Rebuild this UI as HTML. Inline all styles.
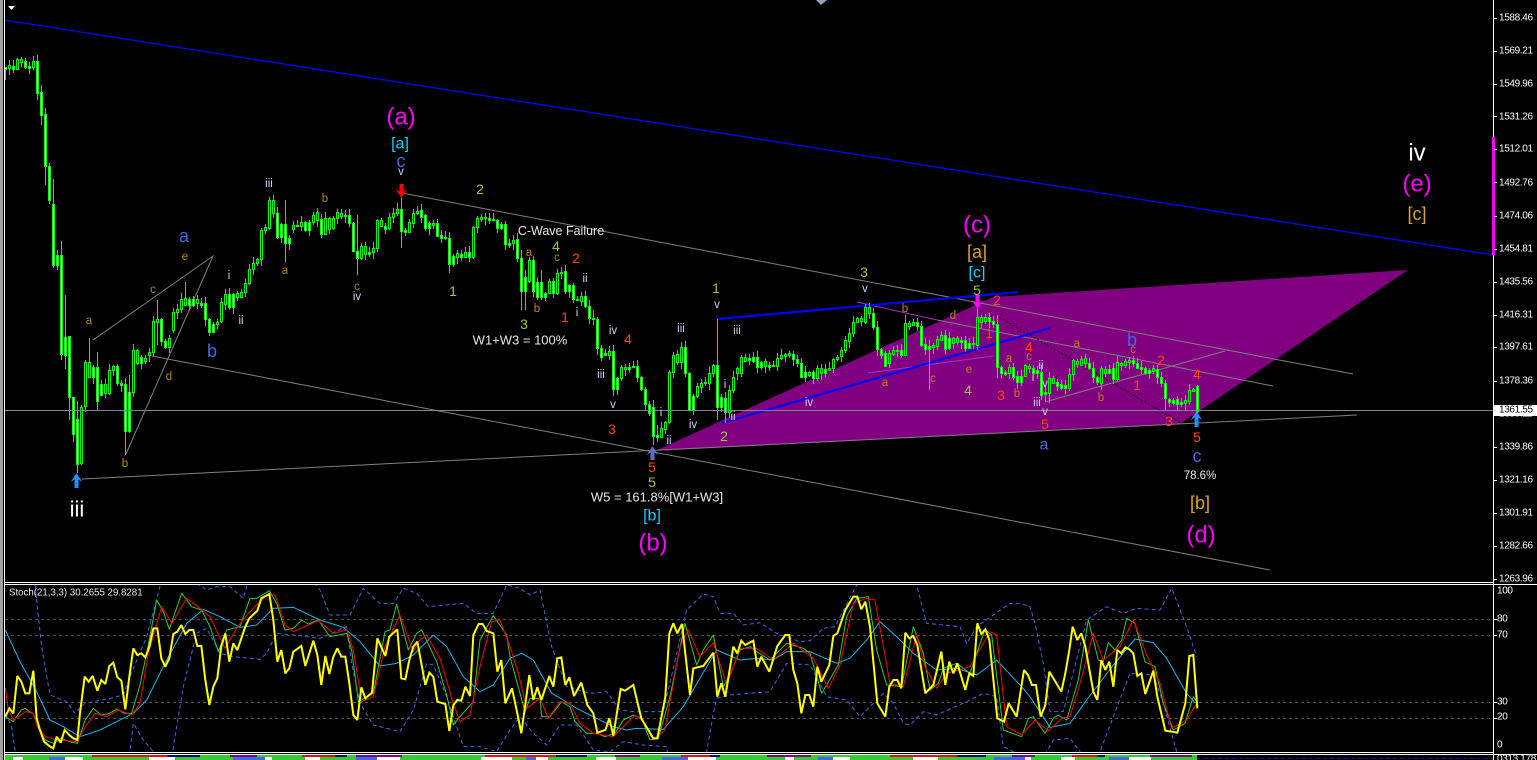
<!DOCTYPE html>
<html><head><meta charset="utf-8"><title>Chart</title>
<style>
html,body{margin:0;padding:0;background:#000;width:1537px;height:760px;overflow:hidden}
svg{display:block;position:absolute;left:0;top:0}
text{font-family:"Liberation Sans",sans-serif;text-anchor:middle;dominant-baseline:central}
.ax text{text-anchor:start;fill:#fff;font-size:10px;letter-spacing:-.35px}
.M{fill:#f0f;font-size:24px}.C{fill:#00d4ff;font-size:16px}.G{fill:#daa520;font-size:18px}
.R{fill:#4169e1;font-size:18px}.L{fill:#c8d4f4;font-size:11.5px}.D{fill:#b8860b;font-size:11.5px}
.Y{fill:#9acd32;font-size:14px}.O{fill:#ff4500;font-size:14px}.W{fill:#e8e8e8;font-size:13px}
.l{fill:none;stroke:#808080;stroke-width:1}
</style></head><body>
<svg id="s" width="1537" height="760" viewBox="0 0 1537 760">
<rect width="1537" height="760" fill="#000"/>
<rect x="0" y="0" width="3" height="760" fill="#a0a0a0"/>
<polygon points="655,451 993,297 1408,270 1180,424" fill="#800080"/>
<g class="l">
<path d="M93 340L213 256L126 454"/>
<path d="M152 356L1270 570"/>
<path d="M82 479L1357 415"/>
<path d="M402 193L1353 374"/>
<path d="M937 320L1273 386"/>
<path d="M1045 402L1225 351"/>
</g>
<path d="M857 302L937 320" stroke="#a030d0" fill="none"/>
<path d="M868 373L993 356" stroke="#a030d0" fill="none"/>
<path d="M999 317L1181 423" stroke="#000" stroke-dasharray="2 2" fill="none"/>
<path d="M5 20L1493 255" stroke="#0000ff" stroke-width="1.3" fill="none"/>
<path d="M717 319L1018 292M722 423L1050 328" stroke="#0000ff" stroke-width="2.2" fill="none"/>
<g id="cw"></g>
<path d="M5 410.5H1493" stroke="#778899" fill="none"/>
<g id="arrows">
<path transform="translate(401.5,198) scale(1,-1)" d="M0 0L5.8 9L2 6.5V14H-2V6.5L-5.8 9Z" fill="#f00"/>
<path transform="translate(76.5,473)" d="M0 0L5.8 9L2 6.5V15H-2V6.5L-5.8 9Z" fill="#1e90ff"/>
<path transform="translate(652.5,446)" d="M0 0L5.8 9L2 6.5V14H-2V6.5L-5.8 9Z" fill="#6070c0"/>
<path transform="translate(977.5,309) scale(1,-1)" d="M0 0L5.8 9L2 6.5V14H-2V6.5L-5.8 9Z" fill="#f0f"/>
<path transform="translate(1196.5,411)" d="M0 0L5.8 9L2 6.5V16H-2V6.5L-5.8 9Z" fill="#1e90ff"/>
</g>
<g>
<text x="401" y="117" class="M">(a)</text><text x="400" y="144" class="C">[a]</text><text x="401" y="161" class="R">c</text><text x="401" y="172" class="L">v</text>
<text x="184" y="236" class="R">a</text><text x="185" y="257" class="D">e</text><text x="153" y="290" class="D">c</text><text x="89" y="321" class="D">a</text><text x="125" y="464" class="D">b</text><text x="169" y="377" class="D">d</text><text x="212" y="351" class="R">b</text>
<text x="241" y="321" class="L">ii</text><text x="229" y="276" class="L">i</text><text x="269" y="184" class="L">iii</text><text x="285" y="271" class="D">a</text><text x="325" y="199" class="D">b</text><text x="357" y="287" class="D">c</text><text x="357" y="297" class="L">iv</text>
<text x="480" y="189" class="Y">2</text><text x="453" y="291" class="Y">1</text><text x="561" y="231" class="W" style="font-size:12.5px">C-Wave Failure</text>
<text x="529" y="253" class="D">a</text><text x="524" y="324" class="Y">3</text><text x="537" y="309" class="D">b</text><text x="557" y="258" class="D">c</text><text x="556" y="246" class="Y">4</text><text x="576" y="258" class="O">2</text><text x="565" y="317" class="O">1</text><text x="585" y="279" class="L">ii</text><text x="577" y="313" class="L">i</text><text x="613" y="331" class="L">iv</text><text x="628" y="339" class="O">4</text><text x="601" y="375" class="L">iii</text><text x="613" y="405" class="L">v</text><text x="612" y="429" class="O">3</text>
<text x="520" y="340" class="W">W1+W3 = 100%</text>
<text x="661" y="413" class="L">i</text><text x="669" y="441" class="L">ii</text><text x="681" y="329" class="L">iii</text><text x="693" y="425" class="L">iv</text><text x="652" y="467" class="O">5</text><text x="652" y="482" class="Y">5</text>
<text x="657" y="497" class="W">W5 = 161.8%[W1+W3]</text><text x="652" y="516" class="C">[b]</text><text x="653" y="543" class="M">(b)</text>
<text x="716" y="288" class="Y">1</text><text x="717" y="305" class="L">v</text><text x="737" y="331" class="L">iii</text><text x="725" y="385" class="L">i</text><text x="733" y="417" class="L">ii</text><text x="724" y="436" class="Y">2</text><text x="809" y="403" class="L">iv</text>
<text x="864" y="272" class="Y">3</text><text x="865" y="289" class="L">v</text><text x="905" y="309" class="D">b</text><text x="885" y="383" class="D">a</text><text x="933" y="379" class="D">c</text><text x="953" y="316" class="D">d</text><text x="969" y="370" class="D">e</text><text x="968" y="390" class="Y">4</text>
<text x="977" y="225" class="M">(c)</text><text x="977" y="252" class="G">[a]</text><text x="977" y="273" class="C">[c]</text><text x="977" y="290" class="Y">5</text>
<text x="997" y="300" class="O">2</text><text x="989" y="333" class="O">1</text><text x="1001" y="395" class="O">3</text><text x="1009" y="359" class="D">a</text><text x="1017" y="394" class="D">b</text><text x="1029" y="357" class="D">c</text><text x="1029" y="347" class="O">4</text><text x="1033" y="378" class="L">i</text><text x="1041" y="366" class="L">ii</text><text x="1037" y="403" class="L">iii</text><text x="1045" y="412" class="L">v</text><text x="1045" y="384" class="L">v</text><text x="1045" y="424" class="O">5</text><text x="1044" y="445" class="R" style="font-size:16px">a</text>
<text x="1077" y="344" class="D">a</text><text x="1101" y="398" class="D">b</text><text x="1132" y="340" class="R">b</text><text x="1133" y="350" class="D">c</text><text x="1137" y="385" class="O">1</text><text x="1161" y="360" class="O">2</text><text x="1169" y="421" class="O">3</text><text x="1197" y="374" class="O">4</text><text x="1197" y="437" class="O">5</text><text x="1197" y="456" class="R">c</text>
<text x="1200" y="476" class="W" style="font-size:11.5px">78.6%</text><text x="1200" y="503" class="G">[b]</text><text x="1201" y="535" class="M">(d)</text>
<text x="77" y="509" fill="#fff" style="font-size:22px">iii</text>
<text x="1417" y="153" fill="#fff" style="font-size:24px">iv</text><text x="1417" y="184" class="M">(e)</text><text x="1417" y="214" class="G">[c]</text>
</g>
<!-- frame -->
<path d="M821 5L816 0H827Z" fill="#8fa3b5"/>
<path d="M8 6H15L11.5 10Z" fill="#fff"/>
<rect x="4" y="0" width="1" height="760" fill="#fff"/>
<rect x="1493" y="0" width="1" height="760" fill="#fff"/>
<rect x="1492" y="137" width="3" height="118" fill="#f0f"/>
<rect x="4" y="582" width="1490" height="1" fill="#fff"/>
<rect x="4" y="584" width="1533" height="1" fill="#fff"/>
<rect x="4" y="752" width="1490" height="1" fill="#fff"/>
<rect x="4" y="754" width="1533" height="1" fill="#fff"/>
<g stroke="#fff" fill="none">
<path d="M1494 18.500h3M1494 51.500h3M1494 84.500h3M1494 116.500h3M1494 149.500h3M1494 182.500h3M1494 216.500h3M1494 249.500h3M1494 282.500h3M1494 315.500h3M1494 347.500h3M1494 381.500h3M1494 414.500h3M1494 447.500h3M1494 480.500h3M1494 513.500h3M1494 546.500h3M1494 579.500h3M1494 619.500h3M1494 635.500h3M1494 702.500h3M1494 718.500h3"/>
</g>
<g class="ax">
<text x="1499" y="18">1588.46</text><text x="1499" y="51">1569.21</text><text x="1499" y="84">1549.96</text><text x="1499" y="117">1531.26</text><text x="1499" y="149">1512.01</text><text x="1499" y="183">1492.76</text><text x="1499" y="216">1474.06</text><text x="1499" y="249">1454.81</text><text x="1499" y="282">1435.56</text><text x="1499" y="315">1416.31</text><text x="1499" y="347">1397.61</text><text x="1499" y="381">1378.36</text><text x="1499" y="414">1359.11</text>
<rect x="1494" y="405" width="43" height="11" fill="#fff"/><text x="1499" y="410" style="fill:#000">1361.55</text>
<text x="1499" y="447">1339.86</text><text x="1499" y="480">1321.16</text><text x="1499" y="513">1301.91</text><text x="1499" y="546">1282.66</text><text x="1499" y="579">1263.96</text>
<text x="1497" y="591">100</text><text x="1497" y="619">80</text><text x="1497" y="635">70</text><text x="1497" y="702">30</text><text x="1497" y="717">20</text><text x="1497" y="745">0</text><text x="1497" y="759">0313.178</text>
</g>
<path d="M5 619.500H1493M5 635.500H1493M5 702.500H1493M5 718.500H1493" stroke="#505050" stroke-dasharray="3 3" fill="none"/>
<text x="9" y="593" style="text-anchor:start;font-size:9.7px" fill="#e8e8e8">Stoch(21,3,3) 30.2655 29.8281</text>
<svg x="5" y="585" width="1488" height="167" viewBox="5 585 1488 167">
<g transform="translate(0,570) scale(.33333)" fill="none" stroke-linejoin="round">
<polyline stroke="#4169e1" stroke-width="3" stroke-dasharray="12 9" points="105,45 125,230 150,375 200,395 225,430 255,400 330,385 370,375 390,320 440,200 480,50 490,-20 580,-20 590,40 620,60 650,50 690,50 730,85 760,-20 900,-20 960,60 990,135 1050,135 1090,55 1140,100 1180,100 1210,55 1250,70 1285,110 1390,100 1430,130 1480,130 1520,45 1560,55 1590,75 1620,60 1655,230 1700,350 1770,370 1820,365 1860,420 1900,425 1990,425 2060,120 2110,72 2140,80 2160,130 2200,130 2230,165 2280,158 2330,190 2400,215 2430,212 2470,175 2505,170 2570,45 2575,-20 2745,-20 2750,45 2780,160 2880,170 2900,220 2930,170 3030,100 3060,100 3090,110 3105,160 3130,280 3150,425 3190,425 3260,150 3320,110 3370,130 3410,115 3480,120 3515,55 3560,170 3590,260"/>
<polyline stroke="#4169e1" stroke-width="3" stroke-dasharray="12 9" points="16,430 35,470 45,540 50,620 380,620 400,460 430,510 460,545 470,620 510,620 520,530 550,350 590,190 620,175 660,250 700,260 780,268 800,250 830,190 880,195 960,205 1040,170 1055,280 1080,400 1120,465 1200,485 1240,420 1280,280 1300,285 1340,380 1370,470 1390,530 1440,530 1490,545 1530,480 1560,440 1600,490 1640,525 1680,465 1730,465 1780,540 1830,545 1870,515 1930,525 2000,530 2010,620 2110,620 2120,545 2140,430 2150,385 2190,375 2310,365 2360,280 2430,285 2480,380 2540,390 2580,440 2650,370 2680,400 2710,460 2730,465 2770,425 2810,435 2900,395 2950,370 2990,380 3010,530 3040,545 3050,620 3130,620 3140,545 3160,510 3210,505 3240,545 3245,620 3295,620 3300,545 3340,440 3390,310 3460,315 3490,400 3530,545"/>
<polyline stroke="#1ab5f0" stroke-width="3" points="16,180 60,275 110,365 150,450 190,470 240,500 300,480 400,430 440,390 500,270 560,160 610,118 660,140 720,172 770,165 820,115 880,112 960,150 1030,172 1080,215 1140,288 1190,280 1240,255 1300,195 1340,230 1390,320 1440,365 1480,345 1530,265 1565,250 1600,270 1655,370 1690,390 1730,415 1780,440 1840,470 1880,480 1910,475 1990,478 2050,410 2150,240 2220,270 2270,265 2320,270 2360,245 2430,245 2510,280 2550,265 2600,210 2640,155 2690,200 2740,250 2810,300 2870,295 2930,315 2990,270 3060,345 3090,380 3150,472 3210,460 3260,390 3340,285 3405,207 3460,218 3500,265 3560,370 3585,398"/>
<polyline stroke="#32cd32" stroke-width="3" points="16,440 40,455 64,420 76,415 88,425 100,430 112,470 136,510 160,520 184,505 208,515 232,520 256,450 280,415 304,435 328,430 352,417 372,430 395,430 420,345 445,225 470,90 490,125 508,178 545,70 575,110 605,120 630,170 655,245 680,180 720,170 750,85 770,85 808,62 830,100 855,180 880,175 905,150 925,162 955,150 990,200 1040,190 1055,240 1075,395 1120,370 1155,185 1170,180 1190,103 1225,240 1250,190 1265,180 1310,275 1340,375 1360,465 1380,440 1420,395 1440,210 1480,137 1520,195 1530,260 1575,425 1590,385 1620,385 1625,440 1650,440 1685,395 1710,410 1725,455 1760,490 1790,490 1815,500 1845,490 1870,450 1900,435 1925,445 1950,510 1975,505 2010,380 2055,160 2090,285 2110,240 2140,195 2170,350 2190,315 2220,240 2250,230 2270,245 2310,270 2360,220 2410,235 2430,250 2465,370 2515,285 2540,140 2570,85 2605,80 2630,240 2660,345 2705,350 2740,170 2770,250 2790,360 2815,340 2830,295 2870,280 2910,310 2955,178 2975,195 3010,480 3065,500 3085,445 3100,440 3135,490 3160,445 3175,435 3200,450 3235,330 3265,150 3295,270 3310,275 3325,218 3345,240 3365,210 3380,145 3405,160 3435,275 3465,290 3490,400 3520,480 3555,460 3580,380 3590,395"/>
<polyline stroke="#f00" stroke-width="3" points="16,355 25,420 40,450 76,425 100,430 112,470 136,500 170,510 232,515 256,470 285,430 320,440 355,420 395,435 420,400 445,250 485,110 516,160 560,85 600,115 630,140 675,235 710,175 745,130 800,75 825,75 855,165 880,185 955,152 1000,190 1040,180 1060,240 1085,395 1120,380 1155,230 1200,135 1240,245 1255,215 1280,195 1320,265 1360,400 1380,455 1410,435 1440,290 1475,155 1500,150 1530,230 1555,310 1580,415 1620,385 1645,445 1680,395 1710,400 1740,460 1780,490 1840,500 1875,465 1905,435 1925,450 1960,510 1995,480 2040,230 2065,180 2100,260 2140,218 2180,345 2220,235 2270,235 2320,270 2380,220 2440,265 2485,355 2520,285 2560,100 2600,85 2625,90 2670,340 2710,350 2750,195 2775,290 2810,355 2840,310 2910,290 2970,185 2990,195 3020,470 3065,495 3105,450 3145,483 3185,445 3210,440 3240,340 3280,190 3310,270 3360,230 3400,150 3440,255 3480,340 3515,475 3560,450 3590,400"/>
<polyline stroke="#ff0" stroke-width="6" stroke-linejoin="miter" stroke-miterlimit="2" points="16,440 28,415 40,430 52,318 64,335 76,370 88,370 100,302 110,445 120,480 132,515 148,528 160,535 170,500 182,518 194,480 208,495 220,505 232,510 240,430 254,320 266,335 278,318 292,362 304,330 316,342 328,288 340,278 352,322 364,332 376,418 388,320 400,235 412,255 424,250 436,262 448,230 460,175 472,175 484,265 496,290 508,265 520,192 532,185 544,165 556,192 568,180 580,180 592,228 604,228 616,330 628,405 640,350 652,325 664,228 676,190 688,275 700,220 712,240 724,205 736,170 748,145 772,122 784,85 808,72 820,150 832,275 844,240 856,310 868,295 880,245 904,228 916,288 928,250 940,212 952,255 964,345 976,258 988,312 1000,260 1012,235 1024,260 1036,260 1048,340 1060,435 1072,450 1084,352 1096,385 1116,368 1132,205 1156,258 1168,200 1192,178 1204,325 1216,328 1228,270 1240,230 1252,215 1276,345 1288,308 1300,320 1312,395 1336,402 1348,483 1360,405 1372,390 1384,392 1396,350 1410,378 1420,195 1436,162 1448,162 1460,183 1480,190 1492,305 1504,270 1516,400 1536,355 1552,430 1564,490 1588,315 1600,390 1612,352 1624,390 1648,318 1660,350 1672,265 1684,262 1696,345 1708,322 1722,378 1744,338 1762,405 1780,430 1792,488 1816,480 1828,445 1840,497 1862,357 1875,362 1900,345 1924,445 1960,505 1972,505 1996,380 2008,190 2020,160 2032,190 2046,162 2070,375 2080,295 2110,288 2140,248 2152,380 2164,340 2176,380 2200,230 2212,250 2224,212 2236,225 2260,212 2272,290 2284,260 2308,305 2332,228 2356,195 2368,195 2380,300 2392,340 2404,430 2416,375 2428,375 2440,410 2452,290 2464,335 2488,285 2500,198 2512,190 2536,120 2560,80 2572,80 2584,118 2596,95 2610,170 2632,400 2656,440 2668,350 2680,330 2692,330 2704,355 2716,188 2728,205 2740,198 2752,225 2776,370 2800,345 2812,295 2824,245 2836,345 2848,275 2860,310 2872,280 2896,360 2908,310 2920,318 2932,160 2944,192 2956,178 2968,210 2992,445 3012,455 3026,400 3050,440 3072,300 3084,315 3096,345 3108,345 3122,440 3136,405 3148,305 3184,365 3196,310 3208,240 3218,170 3232,210 3244,190 3256,230 3280,365 3292,390 3304,270 3316,300 3328,275 3340,350 3352,240 3364,250 3376,232 3388,238 3400,250 3412,318 3424,310 3436,372 3460,302 3472,380 3496,482 3532,488 3556,400 3568,258 3580,255 3592,415"/>
</g>
</svg>
<g id="strip"><rect x="5" y="755" width="1192" height="5" fill="#32cd32"/>
<path d="M1197 758.500H1493" stroke="#4b0082" stroke-dasharray="4 3" fill="none"/></g>
</svg>
<script>
var D=("67,69 65,68 66,69 59,69 59,62 61,67 66,68 61,67 61,93 92,115 114,166 166,200 204,265 255,265 255,354 337,355 336,397 397,434 419,464 407,463 362,406 362,377 367,377 367,401 384,395 384,393 370,393 366,370 366,383 383,385 384,431 392,431 350,392 350,363 357,363 358,361 352,355 321,352 319,322 319,341 341,347 338,347 312,330 309,312 299,309 298,305 299,305 299,305 299,303 303,305 303,319 319,332 324,332 322,324 302,321 294,304 294,307 294,307 293,297 292,297 283,292 269,283 263,269 259,263 230,259 227,230 200,228 200,213 213,237 224,237 224,243 238,243 225,229 225,226 222,226 222,230 222,230 215,222 212,220 219,234 218,234 218,229 218,228 212,218 213,216 215,216 215,223 223,251 251,258 246,258 246,254 252,254 248,252 220,248 220,226 226,229 217,228 213,217 209,213 209,231 230,232 222,232 213,223 211,213 210,217 215,228 223,228 223,225 223,236 235,238 237,238 238,264 256,264 253,257 254,257 252,257 252,257 227,257 218,227 217,219 217,218 218,220 219,220 220,228 224,228 224,244 243,245 240,243 239,258 "+
"258,291 277,291 260,281 260,291 282,297 282,297 293,297 281,293 281,293 273,293 272,273 271,291 285,291 285,299 299,300 296,301 296,306 306,318 318,319 319,348 348,357 353,355 351,355 351,389 378,389 367,378 367,369 367,369 366,367 366,377 377,389 389,404 404,413 407,436 435,437 428,437 422,429 372,422 355,372 354,362 347,362 347,373 373,410 396,410 386,396 383,387 382,383 373,383 365,373 365,407 397,407 398,412 390,412 377,390 368,373 357,373 357,361 358,360 357,361 357,367 362,367 361,366 365,367 365,366 358,366 355,358 354,356 353,355 354,359 359,363 363,377 372,377 372,375 372,378 368,378 368,373 369,373 368,370 359,368 357,359 350,356 340,350 333,341 322,333 318,322 318,321 307,322 307,313 313,327 327,349 349,355 353,366 353,363 350,354 350,351 350,355 323,355 323,326 322,325 322,326 326,345 344,349 346,349 345,347 339,346 335,340 335,349 338,348 338,343 338,342 340,342 340,348 343,348 343,344 317,345 317,322 317,321 317,321 321,324 324,367 "+
"367,373 372,374 367,373 367,377 376,382 376,382 365,376 366,368 368,373 370,373 372,395 392,394 378,393 378,383 382,386 384,388 385,388 374,388 360,374 361,364 359,365 358,363 363,368 368,377 377,382 368,383 369,373 369,373 368,379 362,379 363,365 361,365 360,362 360,363 363,368 367,369 368,373 370,373 368,371 369,377 377,383 383,398 399,402 400,403 399,404 402,404 400,403 390,401 389,391 386,411").split(" ");
var O={5:[67,80],41:[85,125],45:[108,185],49:[163,204],53:[179,268],57:[250,270],61:[241,360],65:[295,369],69:[336,420],73:[400,442],77:[401,473],81:[405,465],85:[360,412],89:[338,378],97:[352,410],125:[378,455],129:[375,433],157:[300,345],185:[282,300],269:[197,230],285:[200,262],357:[215,275],401:[186,248],449:[232,273],613:[345,396],653:[400,445],657:[425,442],717:[319,420],725:[392,423],929:[340,390],905:[315,355],977:[297,350],997:[315,378],1041:[365,400],1165:[380,411],1197:[385,425],521:[250,310],525:[270,310],541:[270,300],593:[310,325],1049:[372,403]};
var wp="",wb="",bb="",pm=0;
for(var i=0;i<D.length;i++){var a=D[i].split(",");var t=+a[0],b=+a[1],x=5+4*i,m=(t+b)/2;
var u=1+((i*7+3)%6),v=1+((i*11+2)%7);var h=t-u,l=b+v;if(O[x]){h=O[x][0];l=O[x][1];}
wp+="M"+(x+.5)+" "+h+"V"+l;
var r="M"+(x-.5)+" "+(t+.5)+"h2V"+(b+.5)+"h-2z";
if(m>=pm)wb+=r;else bb+=r;pm=m;}
var ns="http://www.w3.org/2000/svg",g=document.getElementById("cw");
function P(d,f){var e=document.createElementNS(ns,"path");e.setAttribute("d",d);e.setAttribute("stroke","#00ff00");e.setAttribute("fill",f);e.setAttribute("shape-rendering","crispEdges");g.appendChild(e);}
P(wp,"none");P(wb,"#fff");P(bb,"#000");
var st=document.getElementById("strip"),cs=["#800080","#f00","#32cd32","#32cd32","#00008b","#32cd32","#f00"],c2=["#32cd32","#32cd32","#fff","#32cd32","#32cd32","#32cd32","#fff","#4169e1"];
function R(x,y,w,h,c){var e=document.createElementNS(ns,"rect");e.setAttribute("x",x);e.setAttribute("y",y);e.setAttribute("width",w);e.setAttribute("height",h);e.setAttribute("fill",c);st.appendChild(e);}
for(var x=5,k=1;x<1197;k++){var w=Math.min(8+(k*37)%40,1197-x);R(x,755,w,2,cs[(k*5)%7]);x+=w;}
for(var x=5,k=1;x<1197;k++){var w=Math.min(6+(k*29)%27,1197-x);R(x,757,w,3,c2[(k*3)%8]);x+=w;}
</script>
</body></html>
